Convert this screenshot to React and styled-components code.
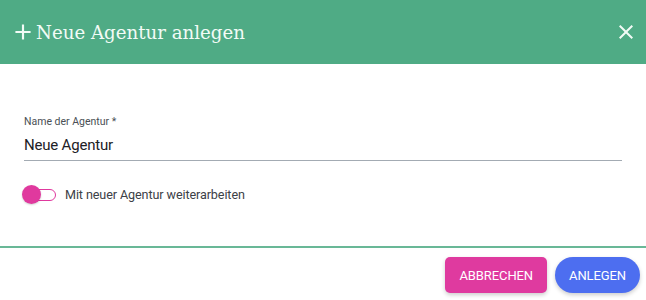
import styled, { createGlobalStyle } from "styled-components";
import { useState } from "react";

const GlobalStyle = createGlobalStyle`
  html, body {
    margin: 0;
    padding: 0;
    background: #ffffff;
  }
  body {
    font-family: Roboto, "Liberation Sans", sans-serif;
  }
`;

const Dialog = styled.div`
  width: 646px;
  height: 300px;
  display: flex;
  flex-direction: column;
  background: #ffffff;
  overflow: hidden;
`;

const Header = styled.header`
  height: 64px;
  flex-shrink: 0;
  display: flex;
  align-items: center;
  justify-content: space-between;
  padding: 0 6px 0 10px;
  background: #4fab85;
  color: #f2fbf6;
`;

const Title = styled.h2`
  display: flex;
  align-items: center;
  gap: 0;
  margin: 0;
  font-family: "DejaVu Serif", "Liberation Serif", serif;
  font-weight: normal;
  font-size: 18.2px;
  letter-spacing: 0;
`;

const IconButton = styled.button`
  display: flex;
  align-items: center;
  justify-content: center;
  width: 28px;
  height: 28px;
  padding: 0;
  border: none;
  background: transparent;
  color: inherit;
  cursor: pointer;
`;

const Body = styled.div`
  flex: 1;
  display: flex;
  flex-direction: column;
  padding: 51px 24px 0 24px;
`;

const Divider = styled.hr`
  flex-shrink: 0;
  height: 2px;
  margin: 0;
  border: none;
  background: #4fab85;
  opacity: 0.85;
`;

const Field = styled.label`
  display: flex;
  flex-direction: column;
  width: 598px;
`;

const FieldLabel = styled.span`
  font-size: 10.5px;
  color: #4a4f55;
  line-height: 14px;
`;

const Input = styled.input`
  margin-top: 4px;
  padding: 3px 0 6px;
  border: none;
  border-bottom: 1px solid #a3abb3;
  outline: none;
  font-family: Roboto, "Liberation Sans", sans-serif;
  font-size: 15px;
  letter-spacing: -0.2px;
  color: #1d2126;
  background: transparent;
`;

const ToggleRow = styled.label`
  display: flex;
  align-items: center;
  gap: 9px;
  margin-top: 26px;
  margin-left: -2px;
  font-size: 12.6px;
  letter-spacing: -0.1px;
  color: #3c4147;
  cursor: pointer;
`;

const Track = styled.span`
  position: relative;
  width: 27px;
  height: 10px;
  border: 1.5px solid #e0399e;
  border-radius: 7px;
  background: #ffffff;
  margin-left: 5px;
`;

const Thumb = styled.span`
  position: absolute;
  top: 50%;
  left: ${(p) => (p.$on ? "12px" : "-6px")};
  width: 19px;
  height: 19px;
  margin-top: -9.5px;
  border-radius: 50%;
  background: #e0399e;
  box-shadow: 0 1px 2px rgba(0, 0, 0, 0.18);
`;

const Footer = styled.footer`
  height: 52px;
  flex-shrink: 0;
  display: flex;
  align-items: flex-start;
  justify-content: flex-end;
  gap: 8px;
  padding: 9px 6px 0 0;
  box-sizing: border-box;
`;

const Button = styled.button`
  height: 36px;
  padding: 0 14px;
  border: none;
  border-radius: ${(p) => (p.$pill ? "18px" : "5px")};
  background: ${(p) => p.$color};
  color: #ffffff;
  font-family: Roboto, "Liberation Sans", sans-serif;
  font-size: 13px;
  letter-spacing: -0.1px;
  text-transform: uppercase;
  box-shadow: 0 2px 4px rgba(0, 0, 0, 0.2);
  cursor: pointer;
`;

export default function App() {
  const [on, setOn] = useState(false);
  return (
    <>
      <GlobalStyle />
      <Dialog>
        <Header>
          <Title>
            <svg width="26" height="26" viewBox="0 0 24 24" fill="currentColor">
              <path d="M19 13h-6v6h-2v-6H5v-2h6V5h2v6h6v2z" />
            </svg>
            Neue Agentur anlegen
          </Title>
          <IconButton aria-label="Schließen">
            <svg width="24" height="24" viewBox="0 0 24 24" fill="currentColor">
              <path d="M19 6.41L17.59 5 12 10.59 6.41 5 5 6.41 10.59 12 5 17.59 6.41 19 12 13.41 17.59 19 19 17.59 13.41 12z" />
            </svg>
          </IconButton>
        </Header>
        <Body>
          <Field>
            <FieldLabel>Name der Agentur *</FieldLabel>
            <Input defaultValue="Neue Agentur" />
          </Field>
          <ToggleRow onClick={() => setOn(!on)}>
            <Track>
              <Thumb $on={on} />
            </Track>
            Mit neuer Agentur weiterarbeiten
          </ToggleRow>
        </Body>
        <Divider />
        <Footer>
          <Button $color="#df3a9f">Abbrechen</Button>
          <Button $color="#4d6ef0" $pill>
            Anlegen
          </Button>
        </Footer>
      </Dialog>
    </>
  );
}
